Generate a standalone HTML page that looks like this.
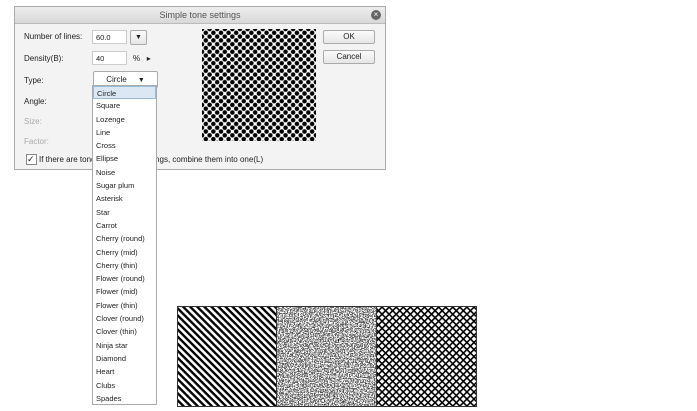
<!DOCTYPE html>
<html><head><style>
body{margin:0;width:697px;height:411px;background:#fff;position:relative;overflow:hidden;font-family:"Liberation Sans",sans-serif;font-size:8px;color:#222}
.abs{position:absolute}
#dlg{left:14px;top:6px;width:372px;height:164px;background:#f3f3f3;border:1px solid #aaa;box-sizing:border-box}
#title{left:0;top:0;width:370px;height:16px;background:linear-gradient(#eee,#d8d8d8);border-bottom:1px solid #bbb;text-align:center;line-height:16px;font-size:9px;color:#555}
.lbl{font-size:8px;color:#222}
.inp{background:#fff;border:1px solid #ccc;height:14px;line-height:14px;padding-left:3px;box-sizing:border-box;font-size:7.5px}
.btn{background:linear-gradient(#fbfbfb,#e6e6e6);border:1px solid #aaa;border-radius:2px;text-align:center;font-size:8px;box-sizing:border-box}
#prev{left:187px;top:22px;width:114px;height:112px;background-color:#fff;
background-image:radial-gradient(circle,#000 2px,transparent 2.5px),radial-gradient(circle,#000 2px,transparent 2.5px);
background-size:7.6px 7.6px;background-position:0 0,3.8px 3.8px}
#list{left:92px;top:85px;width:65px;height:320px;background:#fff;border:1px solid #aaa;box-sizing:border-box}
#list div{height:13.3px;line-height:13.3px;padding-left:3px;font-size:7.5px;color:#222}
</style></head><body>
<div id="dlg" class="abs">
 <div id="title" class="abs">Simple tone settings</div>
 <div class="abs" style="left:356px;top:3px;width:10px;height:10px;border-radius:50%;background:#666;color:#fff;font-size:8px;line-height:10px;text-align:center">×</div>
 <div class="abs lbl" style="left:9px;top:25px">Number of lines:</div>
 <div class="abs inp" style="left:77px;top:23px;width:35px">60.0</div>
 <div class="abs btn" style="left:115px;top:23px;width:17px;height:15px;font-size:7px;line-height:13px">▼</div>
 <div class="abs lbl" style="left:9px;top:47px">Density(B):</div>
 <div class="abs inp" style="left:77px;top:44px;width:35px">40</div>
 <div class="abs lbl" style="left:118px;top:47px">%&nbsp;&nbsp;&nbsp;▸</div>
 <div class="abs lbl" style="left:9px;top:69px">Type:</div>
 <div class="abs btn" style="left:78px;top:64px;width:65px;height:17px;line-height:15px;background:#fff">Circle&nbsp;&nbsp;&nbsp;&nbsp;&nbsp;<span style="font-size:7px">▼</span></div>
 <div class="abs lbl" style="left:9px;top:90px">Angle:</div>
 <div class="abs lbl" style="left:9px;top:110px;color:#aaa">Size:</div>
 <div class="abs lbl" style="left:9px;top:130px;color:#aaa">Factor:</div>
 <div class="abs" style="left:11px;top:147px;width:9px;height:9px;background:#fff;border:1px solid #888;font-size:9px;line-height:9px">✓</div>
 <div class="abs lbl" style="left:24px;top:148px">If there are tone&nbsp;&nbsp;&nbsp;&nbsp;&nbsp;&nbsp;&nbsp;&nbsp;&nbsp;&nbsp;&nbsp;&nbsp;&nbsp;&nbsp;&nbsp;&nbsp;&nbsp;&nbsp;&nbsp;&nbsp;&nbsp;&nbsp;&nbsp;&nbsp;ttings, combine them into one(L)</div>
 <div id="prev" class="abs"></div>
 <div class="abs btn" style="left:308px;top:23px;width:52px;height:14px;line-height:12px">OK</div>
 <div class="abs btn" style="left:308px;top:43px;width:52px;height:14px;line-height:12px">Cancel</div>
</div>
<div id="list" class="abs">
<div style="background:#dbe8f3;border:1px solid #9bbcd8;box-sizing:border-box">Circle</div>
<div>Square</div><div>Lozenge</div><div>Line</div><div>Cross</div><div>Ellipse</div><div>Noise</div><div>Sugar plum</div><div>Asterisk</div><div>Star</div><div>Carrot</div><div>Cherry (round)</div><div>Cherry (mid)</div><div>Cherry (thin)</div><div>Flower (round)</div><div>Flower (mid)</div><div>Flower (thin)</div><div>Clover (round)</div><div>Clover (thin)</div><div>Ninja star</div><div>Diamond</div><div>Heart</div><div>Clubs</div><div>Spades</div>
</div>
<svg class="abs" style="left:177px;top:306px" width="300" height="101" viewBox="0 0 300 101">
<defs>
<pattern id="dg" width="5" height="5" patternUnits="userSpaceOnUse" patternTransform="rotate(45)"><rect width="5" height="2.4" fill="#000"/></pattern>
<pattern id="xh" width="5" height="5" patternUnits="userSpaceOnUse" patternTransform="rotate(45)"><rect width="5" height="5" fill="#000"/><rect x="1.6" y="1.6" width="3.4" height="3.4" fill="#fff"/></pattern>
<filter id="nz" x="0" y="0" width="100%" height="100%" color-interpolation-filters="sRGB"><feTurbulence type="fractalNoise" baseFrequency="0.8" numOctaves="2" seed="3"/><feColorMatrix type="matrix" values="0.33 0.33 0.33 0 0  0.33 0.33 0.33 0 0  0.33 0.33 0.33 0 0  0 0 0 0 1"/><feComponentTransfer><feFuncR type="discrete" tableValues="0 0 0.4 1 1 1"/><feFuncG type="discrete" tableValues="0 0 0.4 1 1 1"/><feFuncB type="discrete" tableValues="0 0 0.4 1 1 1"/></feComponentTransfer></filter>
</defs>
<rect x="1" y="1" width="99" height="99" fill="#fff"/>
<rect x="1" y="1" width="99" height="99" fill="url(#dg)"/>
<rect x="100" y="1" width="99" height="99" fill="#aaa" filter="url(#nz)"/>
<rect x="200" y="1" width="99" height="99" fill="url(#xh)"/>
<rect x="0.5" y="0.5" width="299" height="100" fill="none" stroke="#333"/>
<line x1="99.5" y1="0" x2="99.5" y2="101" stroke="#333"/>
<line x1="199.5" y1="0" x2="199.5" y2="101" stroke="#333"/>
</svg>
</body></html>
